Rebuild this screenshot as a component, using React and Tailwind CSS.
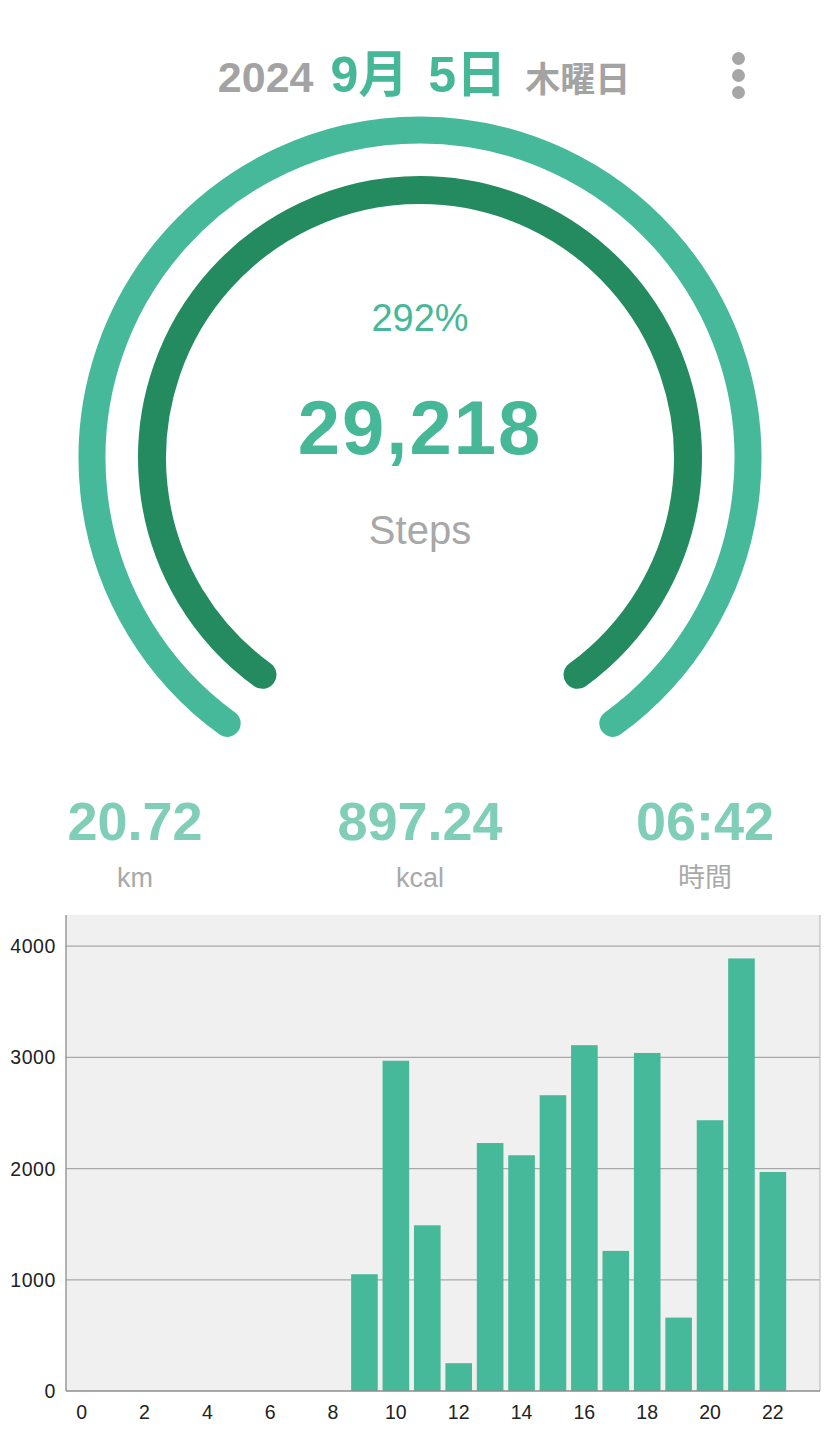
import React from "react";

const FONT = { fontFamily: '"Liberation Sans", "Noto Sans CJK JP", sans-serif' };

const values = [0, 0, 0, 0, 0, 0, 0, 0, 0, 1050, 2970, 1490, 250, 2230, 2120, 2660, 3110, 1260, 3040, 660, 2435, 3890, 1970, 0];

function arcPath(cx, cy, r, deg) {
  const a = (deg * Math.PI) / 180;
  const dx = r * Math.cos(a);
  const dy = r * Math.sin(a);
  return `M ${cx - dx} ${cy + dy} A ${r} ${r} 0 1 1 ${cx + dx} ${cy + dy}`;
}

function Gauge() {
  return (
    <svg className="absolute inset-0" width="840" height="650" viewBox="0 0 840 650">
      <path d={arcPath(420, 348, 328, 54)} fill="none" stroke="#47b99b" strokeWidth="27" strokeLinecap="round" />
      <path d={arcPath(420, 348, 268, 54)} fill="none" stroke="#248a60" strokeWidth="28" strokeLinecap="round" />
    </svg>
  );
}

function Chart() {
  const left = 66;
  const right = 820;
  const top = 15;
  const base = 491;
  const slot = (right - left) / 24;
  const scale = 0.1112;
  const grid = [1000, 2000, 3000, 4000];
  return (
    <svg width="840" height="533" viewBox="0 0 840 533" style={FONT}>
      <rect x={left} y={top} width={right - left} height={base - top} fill="#f0f0f0" />
      {grid.map((g) => (
        <line key={g} x1={left} x2={right} y1={base - g * scale} y2={base - g * scale} stroke="#a8a8a8" strokeWidth="1.2" />
      ))}
      {values.map((v, i) =>
        v > 0 ? (
          <rect key={i} x={left + i * slot + 2.4} y={base - v * scale} width={slot - 4.8} height={v * scale} fill="#46b99b" />
        ) : null
      )}
      <line x1={left} x2={left} y1={top} y2={base} stroke="#8c8c8c" strokeWidth="1.3" />
      <line x1={right} x2={right} y1={top} y2={base} stroke="#b5b5b5" strokeWidth="1" />
      <line x1={left} x2={right} y1={base} y2={base} stroke="#8c8c8c" strokeWidth="1.3" />
      {[0, 1000, 2000, 3000, 4000].map((g) => (
        <text key={g} x="56" y={base - g * scale + 7} textAnchor="end" fontSize="19.5" fill="#222" letterSpacing="0.6">
          {g}
        </text>
      ))}
      {Array.from({ length: 12 }, (_, k) => k * 2).map((h) => (
        <text key={h} x={left + (h + 0.5) * slot} y="519" textAnchor="middle" fontSize="19.5" fill="#222">
          {h}
        </text>
      ))}
    </svg>
  );
}

export default function App() {
  return (
    <div className="w-[840px] h-[1433px] bg-white overflow-hidden" style={FONT}>
      {/* Header */}
      <div className="h-[110px] grid grid-cols-[1fr_auto_1fr] items-start">
        <div />
        <div className="mt-[50px] flex items-baseline leading-none pl-[8px]">
          <span className="text-[43px] font-bold text-[#a3a3a3]">2024</span>
          <span className="ml-[17px] text-[50px] font-bold text-[#46b897]">9月</span>
          <span className="ml-[20px] text-[50px] font-bold text-[#46b897]">5日</span>
          <span className="ml-[19px] text-[35px] font-bold text-[#a3a3a3]">木曜日</span>
        </div>
        <div className="flex justify-end pr-[95px] pt-[52px]">
          <div className="flex flex-col gap-[4px]">
            <div className="w-[13px] h-[13px] rounded-full bg-[#a6a6a6]" />
            <div className="w-[13px] h-[13px] rounded-full bg-[#a6a6a6]" />
            <div className="w-[13px] h-[13px] rounded-full bg-[#a6a6a6]" />
          </div>
        </div>
      </div>

      {/* Gauge */}
      <div className="relative h-[650px]">
        <Gauge />
        <div className="relative flex flex-col items-center pt-[189px] leading-none">
          <div className="text-[38px] h-[38px] text-[#46b897]">292%</div>
          <div className="mt-[53px] h-[76px] text-[76px] font-bold tracking-[2px] text-[#46b897]">29,218</div>
          <div className="mt-[44px] h-[40px] text-[40px] text-[#a8a8a8]">Steps</div>
        </div>
      </div>

      {/* Stats */}
      <div className="flex justify-between px-[35px] pt-[34px] leading-none">
        {[
          ["20.72", "km"],
          ["897.24", "kcal"],
          ["06:42", "時間"],
        ].map(([v, u]) => (
          <div key={u} className="w-[200px] flex flex-col items-center">
            <div className="h-[54px] text-[54px] font-bold text-[#80ceb7]">{v}</div>
            <div className="mt-[17px] h-[27px] text-[27px] text-[#a9a9a9]">{u}</div>
          </div>
        ))}
      </div>

      {/* Chart */}
      <div className="mt-[8px]">
        <Chart />
      </div>
    </div>
  );
}
